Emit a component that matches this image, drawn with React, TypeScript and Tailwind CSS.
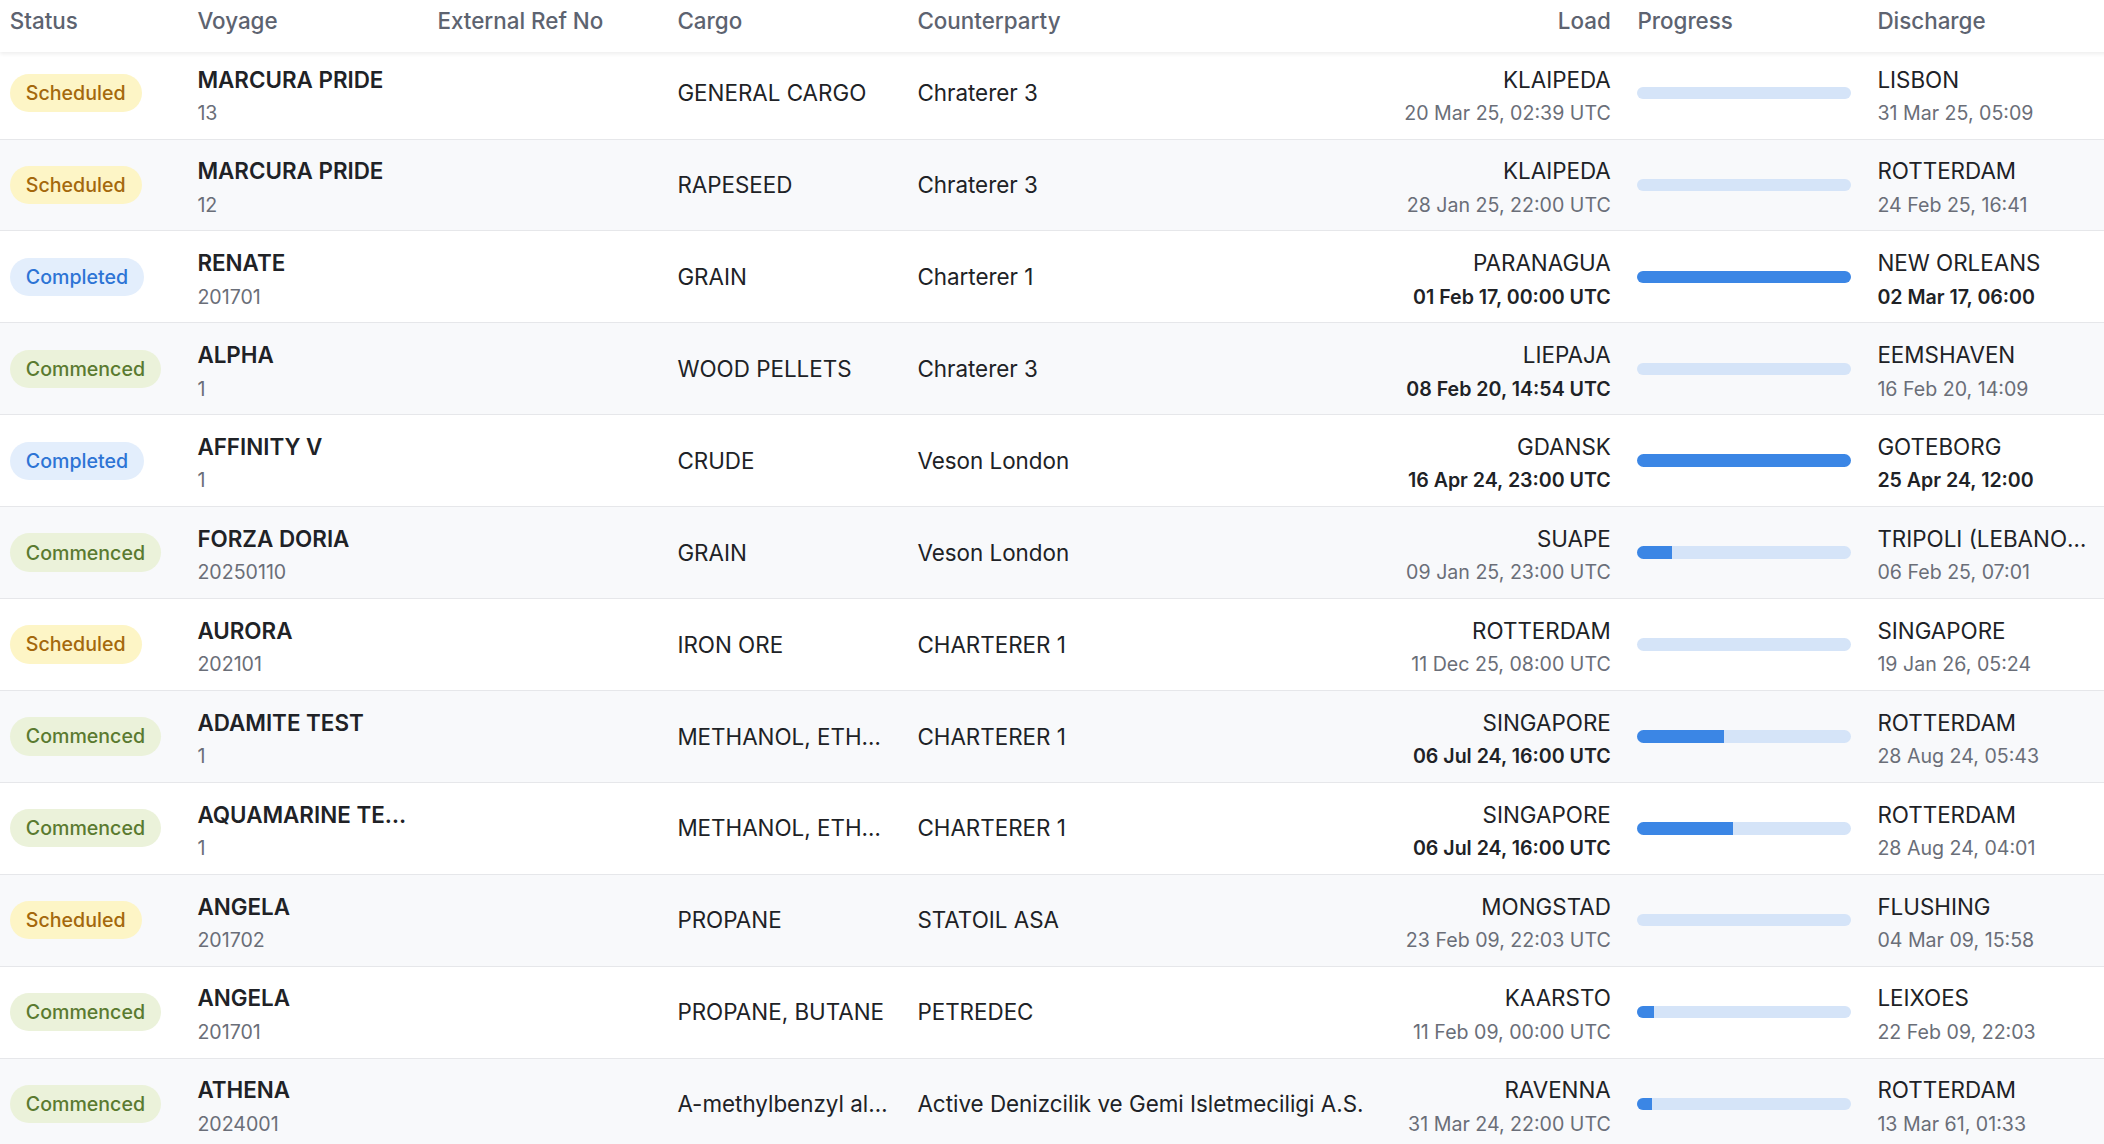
import React from "react";

type Status = "Scheduled" | "Completed" | "Commenced";

interface Row {
  status: Status;
  vessel: string;
  voyNo: string;
  extRef: string;
  cargo: string;
  counterparty: string;
  loadPort: string;
  loadDate: string;
  loadBold: boolean;
  progress: number;
  dischPort: string;
  dischDate: string;
  dischBold: boolean;
}

const rows: Row[] = [
  { status: "Scheduled", vessel: "MARCURA PRIDE", voyNo: "13", extRef: "", cargo: "GENERAL CARGO", counterparty: "Chraterer 3", loadPort: "KLAIPEDA", loadDate: "20 Mar 25, 02:39 UTC", loadBold: false, progress: 0, dischPort: "LISBON", dischDate: "31 Mar 25, 05:09", dischBold: false },
  { status: "Scheduled", vessel: "MARCURA PRIDE", voyNo: "12", extRef: "", cargo: "RAPESEED", counterparty: "Chraterer 3", loadPort: "KLAIPEDA", loadDate: "28 Jan 25, 22:00 UTC", loadBold: false, progress: 0, dischPort: "ROTTERDAM", dischDate: "24 Feb 25, 16:41", dischBold: false },
  { status: "Completed", vessel: "RENATE", voyNo: "201701", extRef: "", cargo: "GRAIN", counterparty: "Charterer 1", loadPort: "PARANAGUA", loadDate: "01 Feb 17, 00:00 UTC", loadBold: true, progress: 100, dischPort: "NEW ORLEANS", dischDate: "02 Mar 17, 06:00", dischBold: true },
  { status: "Commenced", vessel: "ALPHA", voyNo: "1", extRef: "", cargo: "WOOD PELLETS", counterparty: "Chraterer 3", loadPort: "LIEPAJA", loadDate: "08 Feb 20, 14:54 UTC", loadBold: true, progress: 0, dischPort: "EEMSHAVEN", dischDate: "16 Feb 20, 14:09", dischBold: false },
  { status: "Completed", vessel: "AFFINITY V", voyNo: "1", extRef: "", cargo: "CRUDE", counterparty: "Veson London", loadPort: "GDANSK", loadDate: "16 Apr 24, 23:00 UTC", loadBold: true, progress: 100, dischPort: "GOTEBORG", dischDate: "25 Apr 24, 12:00", dischBold: true },
  { status: "Commenced", vessel: "FORZA DORIA", voyNo: "20250110", extRef: "", cargo: "GRAIN", counterparty: "Veson London", loadPort: "SUAPE", loadDate: "09 Jan 25, 23:00 UTC", loadBold: false, progress: 16.4, dischPort: "TRIPOLI (LEBANON)", dischDate: "06 Feb 25, 07:01", dischBold: false },
  { status: "Scheduled", vessel: "AURORA", voyNo: "202101", extRef: "", cargo: "IRON ORE", counterparty: "CHARTERER 1", loadPort: "ROTTERDAM", loadDate: "11 Dec 25, 08:00 UTC", loadBold: false, progress: 0, dischPort: "SINGAPORE", dischDate: "19 Jan 26, 05:24", dischBold: false },
  { status: "Commenced", vessel: "ADAMITE TEST", voyNo: "1", extRef: "", cargo: "METHANOL, ETHANOL", counterparty: "CHARTERER 1", loadPort: "SINGAPORE", loadDate: "06 Jul 24, 16:00 UTC", loadBold: true, progress: 40.8, dischPort: "ROTTERDAM", dischDate: "28 Aug 24, 05:43", dischBold: false },
  { status: "Commenced", vessel: "AQUAMARINE TEST", voyNo: "1", extRef: "", cargo: "METHANOL, ETHANOL", counterparty: "CHARTERER 1", loadPort: "SINGAPORE", loadDate: "06 Jul 24, 16:00 UTC", loadBold: true, progress: 45, dischPort: "ROTTERDAM", dischDate: "28 Aug 24, 04:01", dischBold: false },
  { status: "Scheduled", vessel: "ANGELA", voyNo: "201702", extRef: "", cargo: "PROPANE", counterparty: "STATOIL ASA", loadPort: "MONGSTAD", loadDate: "23 Feb 09, 22:03 UTC", loadBold: false, progress: 0, dischPort: "FLUSHING", dischDate: "04 Mar 09, 15:58", dischBold: false },
  { status: "Commenced", vessel: "ANGELA", voyNo: "201701", extRef: "", cargo: "PROPANE, BUTANE", counterparty: "PETREDEC", loadPort: "KAARSTO", loadDate: "11 Feb 09, 00:00 UTC", loadBold: false, progress: 7.8, dischPort: "LEIXOES", dischDate: "22 Feb 09, 22:03", dischBold: false },
  { status: "Commenced", vessel: "ATHENA", voyNo: "2024001", extRef: "", cargo: "A-methylbenzyl alcohol", counterparty: "Active Denizcilik ve Gemi Isletmeciligi A.S.", loadPort: "RAVENNA", loadDate: "31 Mar 24, 22:00 UTC", loadBold: false, progress: 7, dischPort: "ROTTERDAM", dischDate: "13 Mar 61, 01:33", dischBold: false },
];

const GRID = "grid grid-cols-[187.6px_240px_240px_240px_480px_240px_240px_240px]";
const CELL = "pl-[9.8px] pr-[16.8px] min-w-0";

function Badge({ status }: { status: Status }) {
  const cls =
    status === "Scheduled"
      ? "bg-[#fdf5c6] text-[#a4680c]"
      : status === "Completed"
      ? "bg-[#e3eefc] text-[#2d74d5]"
      : "bg-[#ebf2da] text-[#5a7a30]";
  return (
    <span className={`inline-flex h-[38.4px] items-center rounded-full px-[16px] text-[19.6px] font-medium leading-[28px] ${cls}`}>
      {status}
    </span>
  );
}

function TwoLine({
  top,
  bottom,
  bold,
  right,
  topBold,
}: {
  top: string;
  bottom: string;
  bold?: boolean;
  right?: boolean;
  topBold?: boolean;
}) {
  return (
    <div className={`flex h-full flex-col justify-center pt-[3.1px] ${right ? "items-end text-right" : "items-start"}`}>
      <div className={`w-full truncate text-[22.4px] leading-[33.6px] text-[#202226] ${topBold ? "font-semibold" : "font-normal"}`}>
        {top}
      </div>
      <div
        className={`mt-[2.7px] w-full truncate text-[19.6px] leading-[28px] ${
          bold ? "font-semibold text-[#202226]" : "font-normal text-[#6a6e78]"
        }`}
      >
        {bottom}
      </div>
    </div>
  );
}

function Progress({ value }: { value: number }) {
  return (
    <div className="flex h-full items-center">
      <div className="h-[12.6px] w-full overflow-hidden rounded-full bg-[#d5e4f8]">
        <div className="h-full bg-[#3b86e5]" style={{ width: `${value}%` }} />
      </div>
    </div>
  );
}

export default function App() {
  const headers = ["Status", "Voyage", "External Ref No", "Cargo", "Counterparty", "Load", "Progress", "Discharge"];
  return (
    <div className="h-[1144px] w-full overflow-hidden bg-white font-[Inter,sans-serif] antialiased">
      <div className="w-[2108px]">
        <div className={`${GRID} relative z-10 h-[52px] bg-white shadow-[0_2px_4px_rgba(0,0,0,0.07)]`}>
          {headers.map((h, i) => (
            <div
              key={h}
              className={`${CELL} pt-[4.2px] text-[22.4px] font-medium leading-[33.6px] text-[#5d6370] ${i === 5 ? "text-right" : ""}`}
            >
              {h}
            </div>
          ))}
        </div>
        <div className="-mt-[4.3px]">
          {rows.map((r, idx) => (
            <div
              key={idx}
              className={`${GRID} h-[91.9px] border-b border-[#e6e7ea] ${idx % 2 === 1 ? "bg-[#f8f9fb]" : "bg-white"}`}
            >
              <div className={`${CELL} flex items-center`}>
                <Badge status={r.status} />
              </div>
              <div className={CELL}>
                <TwoLine top={r.vessel} bottom={r.voyNo} topBold />
              </div>
              <div className={`${CELL} flex items-center text-[22.4px] leading-[33.6px] text-[#202226]`}>
                <span className="truncate">{r.extRef}</span>
              </div>
              <div className={`${CELL} flex items-center text-[22.4px] leading-[33.6px] text-[#202226]`}>
                <span className="truncate">{r.cargo}</span>
              </div>
              <div className={`${CELL} flex items-center text-[22.4px] leading-[33.6px] text-[#202226]`}>
                <span className="truncate">{r.counterparty}</span>
              </div>
              <div className={CELL}>
                <TwoLine top={r.loadPort} bottom={r.loadDate} bold={r.loadBold} right />
              </div>
              <div className={CELL}>
                <Progress value={r.progress} />
              </div>
              <div className={CELL}>
                <TwoLine top={r.dischPort} bottom={r.dischDate} bold={r.dischBold} />
              </div>
            </div>
          ))}
        </div>
      </div>
    </div>
  );
}
